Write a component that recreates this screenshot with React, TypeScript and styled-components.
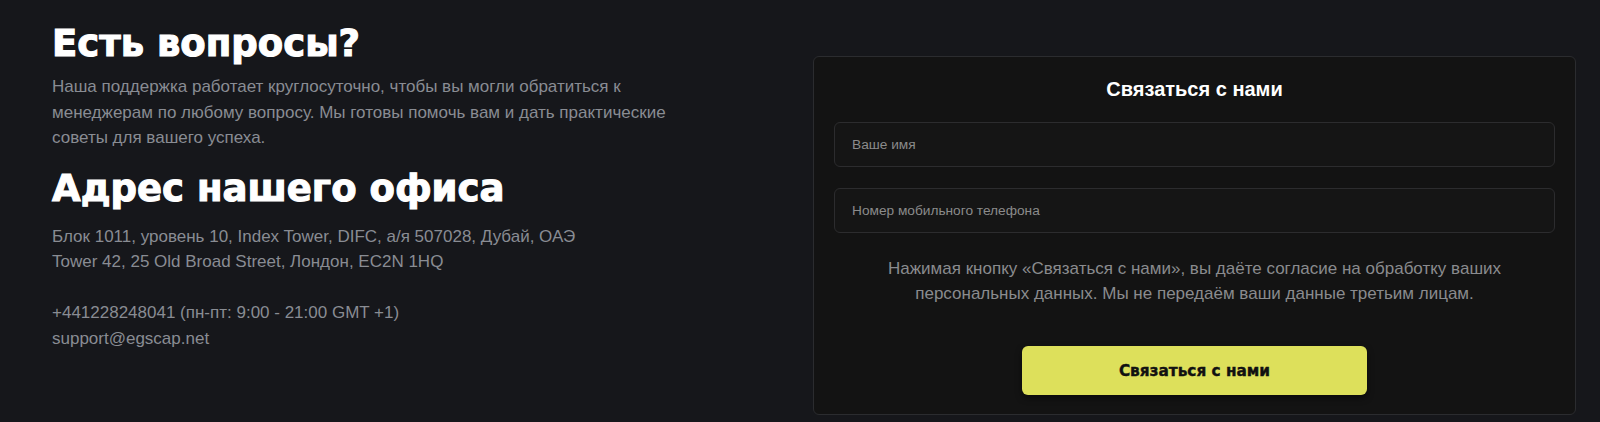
import React from "react";
import styled, { createGlobalStyle } from "styled-components";

const GlobalStyle = createGlobalStyle`
  html, body { margin: 0; padding: 0; background: #16171b; }
  body { font-family: "Liberation Sans", Arial, sans-serif; }
  * { box-sizing: border-box; }
`;

const Section = styled.section`
  display: grid;
  grid-template-columns: 1fr 763px;
  column-gap: 48px;
  align-items: start;
  padding: 22px 24px 7px 52px;
  background: #16171b;
  min-height: 422px;
`;

const InfoColumn = styled.div`
  display: flex;
  flex-direction: column;
`;

const Heading = styled.h2<{ $top?: number }>`
  margin: ${(p) => p.$top ?? 0}px 0 0 0;
  font-family: "DejaVu Sans", "Liberation Sans", sans-serif;
  font-weight: 700;
  font-size: 37px;
  line-height: 44px;
  color: #ffffff;
  letter-spacing: 0px;
  -webkit-text-stroke: 1.1px #ffffff;
`;

const Text = styled.p<{ $top?: number }>`
  margin: ${(p) => p.$top ?? 0}px 0 0 0;
  font-family: "Liberation Sans", Arial, sans-serif;
  font-size: 17px;
  line-height: 25.5px;
  color: #898c93;
  max-width: 640px;
`;

const Card = styled.form`
  display: flex;
  flex-direction: column;
  align-items: stretch;
  margin-top: 34px;
  height: 359px;
  padding: 20px 20px 19px 20px;
  background: #131313;
  border: 1px solid #2b2c2f;
  border-radius: 6px;
`;

const CardTitle = styled.h3`
  margin: 0;
  text-align: center;
  font-family: "Liberation Sans", Arial, sans-serif;
  font-weight: 700;
  font-size: 20px;
  line-height: 24px;
  color: #ffffff;
`;

const Field = styled.input<{ $top: number }>`
  margin-top: ${(p) => p.$top}px;
  height: 45px;
  width: 100%;
  padding: 0 17px;
  background: #151515;
  border: 1px solid #2c2c2e;
  border-radius: 6px;
  font-family: "Liberation Sans", Arial, sans-serif;
  font-size: 13.7px;
  color: #ddd;
  outline: none;
  &::placeholder { color: #8b8b8b; }
`;

const Consent = styled.p`
  margin: 23px 0 0 0;
  text-align: center;
  font-family: "Liberation Sans", Arial, sans-serif;
  font-size: 17px;
  line-height: 25px;
  color: #8a8b8e;
`;

const SubmitButton = styled.button`
  align-self: center;
  margin-top: auto;
  width: 345px;
  height: 49px;
  border: none;
  border-radius: 6px;
  background: #dde05b;
  box-shadow: 0 3px 6px rgba(0, 0, 0, 0.5);
  font-family: "DejaVu Sans", "Liberation Sans", sans-serif;
  font-weight: 700;
  font-size: 15.3px;
  color: #111111;
  -webkit-text-stroke: 0.4px #111111;
  cursor: pointer;
`;

export default function App() {
  return (
    <>
      <GlobalStyle />
      <Section>
        <InfoColumn>
          <Heading>Есть вопросы?</Heading>
          <Text $top={8}>
            Наша поддержка работает круглосуточно, чтобы вы могли обратиться к менеджерам по
            любому вопросу. Мы готовы помочь вам и дать практические советы для вашего успеха.
          </Text>
          <Heading $top={16}>Адрес нашего офиса</Heading>
          <Text $top={13}>
            Блок 1011, уровень 10, Index Tower, DIFC, а/я 507028, Дубай, ОАЭ
            <br />
            Tower 42, 25 Old Broad Street, Лондон, EC2N 1HQ
          </Text>
          <Text $top={25.5}>
            +441228248041 (пн-пт: 9:00 - 21:00 GMT +1)
            <br />
            support@egscap.net
          </Text>
        </InfoColumn>
        <Card onSubmit={(e) => e.preventDefault()}>
          <CardTitle>Связаться с нами</CardTitle>
          <Field $top={21} type="text" placeholder="Ваше имя" />
          <Field $top={21} type="tel" placeholder="Номер мобильного телефона" />
          <Consent>
            Нажимая кнопку «Связаться с нами», вы даёте согласие на обработку ваших
            <br />
            персональных данных. Мы не передаём ваши данные третьим лицам.
          </Consent>
          <SubmitButton type="submit">Связаться с нами</SubmitButton>
        </Card>
      </Section>
    </>
  );
}
